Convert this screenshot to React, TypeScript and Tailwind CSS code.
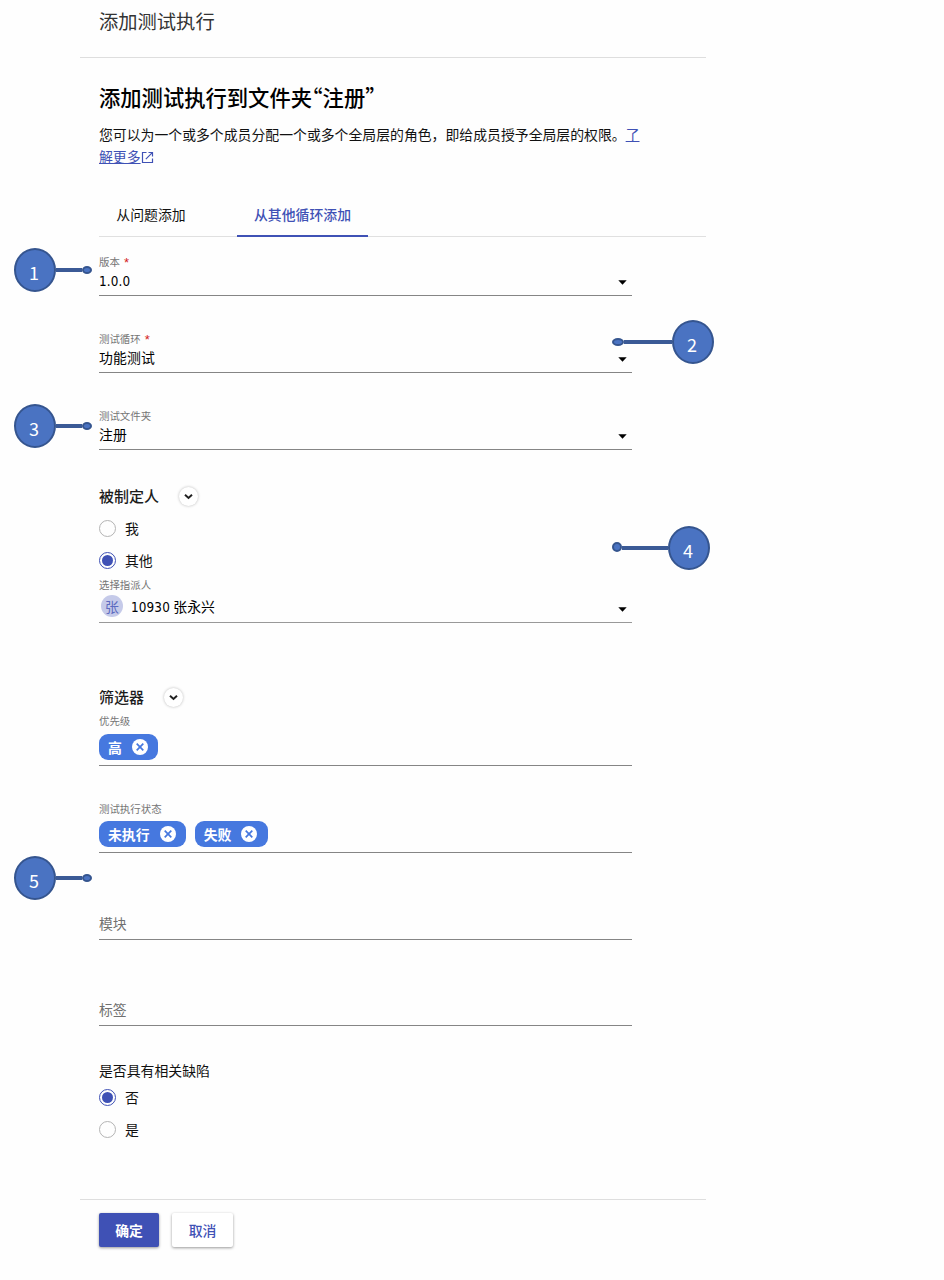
import type { ReactNode } from "react";

function Caret({ className = "" }: { className?: string }) {
  return (
    <svg className={`mr-[5px] h-[5px] w-[9px] shrink-0 ${className}`} viewBox="0 0 9 5">
      <path d="M0.3 0.3H8.7L4.5 4.7Z" fill="#000" />
    </svg>
  );
}

function Label({ children, required }: { children: ReactNode; required?: boolean }) {
  return (
    <div className="h-4 text-[10.45px] leading-4 text-[#757575]">
      {children}
      {required && (
        <span className="ml-1 inline-block h-2 align-[-1px] font-['Liberation_Sans'] text-[13px] leading-none text-[#d32020]">
          *
        </span>
      )}
    </div>
  );
}

function Digits({ children }: { children: string }) {
  return (
    <span className="font-['DejaVu_Sans_Condensed','DejaVu_Sans',sans-serif] text-[13.4px] font-stretch-condensed">
      {children}
    </span>
  );
}

function SelectField({ label, value, required }: { label: string; value: ReactNode; required?: boolean }) {
  return (
    <div className="h-[77px]">
      <Label required={required}>{label}</Label>
      <div className="flex h-[26px] items-center justify-between border-b border-[#858585]">
        <span className="-mt-[5px] h-[22px] leading-[22px] tracking-[0.15px] text-black">{value}</span>
        <Caret />
      </div>
    </div>
  );
}

function Radio({ label, checked }: { label: string; checked?: boolean }) {
  return (
    <div className="flex h-8 items-center gap-[9px]">
      <span
        className={`flex size-[17px] items-center justify-center rounded-full border ${
          checked ? "border-[#3f51b5]" : "border-[#b4b4b4]"
        }`}
      >
        {checked && <span className="size-[11px] rounded-full bg-[#3f51b5]" />}
      </span>
      <span>{label}</span>
    </div>
  );
}

function SectionTitle({ children }: { children: ReactNode }) {
  return (
    <div className="flex h-8 items-center gap-[20px] text-[15px] font-medium text-[#1c1c1c]">
      <span>{children}</span>
      <span className="flex size-[19px] items-center justify-center rounded-full bg-white shadow-[0_0_3px_rgba(0,0,0,0.28)]">
        <svg className="size-[9px]" viewBox="0 0 9 9">
          <path d="M1 2.8L4.5 6L8 2.8" fill="none" stroke="#222" strokeWidth="2" />
        </svg>
      </span>
    </div>
  );
}

function Chip({ children }: { children: ReactNode }) {
  return (
    <span className="flex h-[26px] items-center gap-[10px] rounded-[9px] bg-[#4678df] pr-[10.5px] pl-[9px] font-bold text-white">
      {children}
      <svg className="size-4" viewBox="0 0 16 16">
        <circle cx="8" cy="8" r="8" fill="#fff" />
        <path d="M4.7 4.7L11.3 11.3M11.3 4.7L4.7 11.3" stroke="#4678df" strokeWidth="1.7" />
      </svg>
    </span>
  );
}

interface CalloutProps {
  n: number;
  side: "left" | "right";
  line: string;
  dot: string;
  className: string;
}

function Callout({ n, side, line, dot, className }: CalloutProps) {
  return (
    <div className={`absolute flex items-center ${side === "right" ? "flex-row-reverse" : ""} ${className}`}>
      <span className="flex h-11 w-[42px] items-center justify-center rounded-[50%] border-2 border-[#35558f] bg-[#4a73c2] pt-[3px] pr-[2px] text-[18px] text-white">
        {n}
      </span>
      <span className={`h-1 bg-[#3b5a96] ${line}`} />
      <span className={`rounded-[50%] border-2 border-[#35558f] bg-[#4a73c2] ${dot}`} />
    </div>
  );
}

export default function App() {
  return (
    <div className="relative h-[1280px] w-[944px] overflow-hidden bg-[#fefefe] font-['Noto_Sans_CJK_SC',sans-serif] text-[13.87px] leading-[22px] text-[#111]">
      <div className="ml-20 w-[626px]">
        <header className="h-[58px] border-b border-[#dedede] pt-[7px] pl-[19px] text-[19.3px] leading-7 text-[#333]">
          添加测试执行
        </header>
        <main className="h-[1141px] pl-[19px]">
          <h1 className="h-[65px] pt-[23px] text-[21.3px] leading-8 font-medium text-black [font-feature-settings:'halt']">
            添加测试执行到文件夹“注册”
          </h1>
          <p className="h-[70px] w-[545px]">
            您可以为一个或多个成员分配一个或多个全局层的角色，即给成员授予全局层的权限。
            <a className="text-[#3f51b5] underline">了</a>
            <a className="flex items-center text-[#3f51b5]">
              <span className="underline">解更多</span>
              <svg className="mt-[2px] size-[13px]" viewBox="0 0 13 13">
                <path
                  d="M5.5 1.5H1.5V11.5H11.5V7.5M7.5 1.5H11.5V5.5M11.3 1.7L4.8 8.2"
                  fill="none"
                  stroke="#3f51b5"
                  strokeWidth="1.2"
                />
              </svg>
            </a>
          </p>
          <nav className="flex h-[44px] gap-[34px] border-b border-[#e0e0e0]">
            <span className="h-[44px] w-[104px] pt-[10px] text-center">从问题添加</span>
            <span className="h-[44px] w-[131px] border-b-2 border-[#3f51b5] pt-[10px] text-center font-medium text-[#3f51b5]">
              从其他循环添加
            </span>
          </nav>
          <form className="w-[533px] pt-[17px]">
            <SelectField label="版本" value={<Digits>1.0.0</Digits>} required />
            <SelectField label="测试循环" value="功能测试" required />
            <SelectField label="测试文件夹" value="注册" />

            <section className="h-[197px]">
              <div className="-mt-[5px]">
                <SectionTitle>被制定人</SectionTitle>
              </div>
              <Radio label="我" />
              <Radio label="其他" checked />
              <div className="pt-px">
                <Label>选择指派人</Label>
              </div>
              <div className="flex h-[30px] items-center justify-between border-b border-[#999]">
                <span className="-mt-[4px] flex items-center gap-2 pl-[2px] text-black">
                  <span className="flex size-[22px] items-center justify-center rounded-full bg-[#c5cae9] text-[#5c6bc0]">
                    张
                  </span>
                  <span className="h-[22px] tracking-[0.12px]">
                    <Digits>10930</Digits> 张永兴
                  </span>
                </span>
                <Caret className="mt-[3px]" />
              </div>
            </section>

            <section className="pt-[4px]">
              <SectionTitle>筛选器</SectionTitle>
              <div className="h-[88px]">
                <Label>优先级</Label>
                <div className="flex h-[37px] items-start border-b border-[#858585] pt-[5px]">
                  <Chip>高</Chip>
                </div>
              </div>
              <div className="h-[98px]">
                <Label>测试执行状态</Label>
                <div className="flex h-[36px] items-start gap-[8.6px] border-b border-[#858585] pt-[4px]">
                  <Chip>未执行</Chip>
                  <Chip>失败</Chip>
                </div>
              </div>
              <div className="mt-[13px] h-[28px] border-b border-[#858585] text-[#707070]">模块</div>
              <div className="mt-[58px] h-[28px] border-b border-[#858585] text-[#707070]">标签</div>
            </section>

            <section className="pt-[33px]">
              <div className="h-[22px]">是否具有相关缺陷</div>
              <Radio label="否" checked />
              <Radio label="是" />
            </section>
          </form>
        </main>
        <footer className="flex h-[81px] items-start gap-[13px] border-t border-[#dedede] pt-[13px] pl-[19px]">
          <button className="h-[34px] w-[60px] rounded-[2px] bg-[#3f51b5] font-bold text-white shadow-[0_1px_3px_rgba(0,0,0,0.4)]">
            确定
          </button>
          <button className="h-[34px] w-[61px] rounded-[2px] bg-white font-medium text-[#3f51b5] shadow-[0_1px_3px_rgba(0,0,0,0.4)]">
            取消
          </button>
        </footer>
      </div>

      <Callout n={1} side="left" line="w-[26px]" dot="h-2 w-[10px]" className="top-[248px] left-[14px]" />
      <Callout n={2} side="right" line="w-[48px]" dot="h-2 w-[12px]" className="top-[320px] left-[612px]" />
      <Callout n={3} side="left" line="w-[26px]" dot="h-2 w-[10px]" className="top-[404px] left-[14px]" />
      <Callout n={4} side="right" line="w-[46px]" dot="-mt-[2px] size-[10px]" className="top-[526px] left-[612px]" />
      <Callout n={5} side="left" line="w-[26px]" dot="h-2 w-[10px]" className="top-[856px] left-[14px]" />
    </div>
  );
}
